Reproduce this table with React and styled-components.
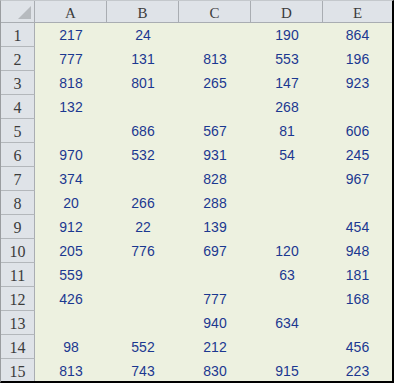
import React from 'react';
import styled, { createGlobalStyle } from "styled-components";

const GlobalStyle = createGlobalStyle`
  body {
    margin: 0;
    background: #ffffff;
  }
`

const Sheet = styled.div`
  display: grid;
  grid-template-columns: 34px repeat(4, 72px) 69px;
  width: 394px;
  box-sizing: border-box;
  border-top: 1px solid #c4c8cc;
  border-left: 1px solid #9a9da0;
  border-right: 2px solid #000;
  border-bottom: 2px solid #000;
  background: #edf1e0;
`

const Corner = styled.div`
  height: 21px;
  background: #dfe3e8;
  border-right: 1px solid #a9adb2;
  border-bottom: 1px solid #a9adb2;
  box-sizing: content-box;
  display: flex;
  justify-content: flex-end;
  align-items: flex-end;
  padding: 0 3px 0 0;
`

const Triangle = styled.div`
  width: 0;
  height: 0;
  margin-bottom: 3px;
  border-left: 13px solid transparent;
  border-bottom: 13px solid #b6babe;
`

const ColHead = styled.div`
  background: #dfe3e8;
  border-bottom: 1px solid #a9adb2;
  border-right: ${p => (p.$last ? "none" : "1px solid #a9adb2")};
  font-family: "Liberation Serif", serif;
  font-size: 15px;
  line-height: 21px;
  padding-top: 2px;
  box-sizing: border-box;
  height: 22px;
  text-align: center;
  color: #3c3c3c;
`

const RowHead = styled.div`
  height: ${p => (p.$last ? "22px" : "24px")};
  box-sizing: border-box;
  background: #dfe3e8;
  border-right: 1px solid #a9adb2;
  border-bottom: ${p => (p.$last ? "none" : "1px solid #b3b7bb")};
  font-family: "Liberation Serif", serif;
  font-size: 16px;
  line-height: 22px;
  padding-top: 2px;
  text-align: center;
  color: #3c3c3c;
`

const Cell = styled.div`
  height: ${p => (p.$last ? "22px" : "24px")};
  font-family: "Liberation Sans", Arial, sans-serif;
  font-size: 14px;
  line-height: 24px;
  text-align: center;
  color: #1b3890;
`

const columns = ["A", "B", "C", "D", "E"];

const data = [
  [217, 24, "", 190, 864],
  [777, 131, 813, 553, 196],
  [818, 801, 265, 147, 923],
  [132, "", "", 268, ""],
  ["", 686, 567, 81, 606],
  [970, 532, 931, 54, 245],
  [374, "", 828, "", 967],
  [20, 266, 288, "", ""],
  [912, 22, 139, "", 454],
  [205, 776, 697, 120, 948],
  [559, "", "", 63, 181],
  [426, "", 777, "", 168],
  ["", "", 940, 634, ""],
  [98, 552, 212, "", 456],
  [813, 743, 830, 915, 223],
];

const App = () => {
  return (
    <>
      <GlobalStyle />
      <Sheet>
        <Corner>
          <Triangle />
        </Corner>
        {columns.map((c, i) => (
          <ColHead key={c} $last={i === columns.length - 1}>{c}</ColHead>
        ))}
        {data.map((row, r) => {
          const last = r === data.length - 1;
          return (
            <React.Fragment key={r}>
              <RowHead $last={last}>{r + 1}</RowHead>
              {row.map((v, c) => (
                <Cell key={c} $last={last}>{v}</Cell>
              ))}
            </React.Fragment>
          );
        })}
      </Sheet>
    </>
  )
}

export default App
